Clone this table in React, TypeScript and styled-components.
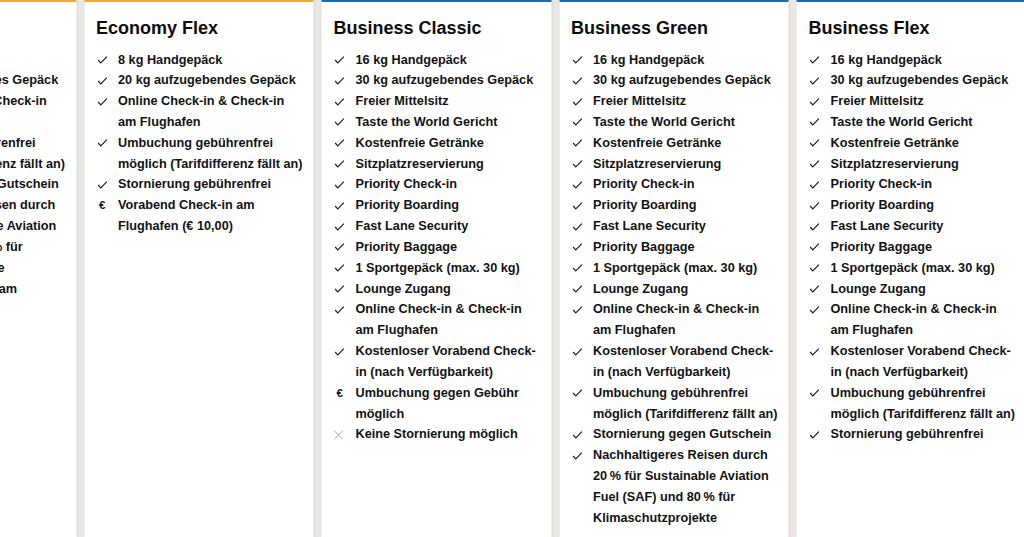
import React from 'react';
import styled, { createGlobalStyle } from 'styled-components';

const GlobalStyle = createGlobalStyle`
  html, body { margin: 0; padding: 0; }
  body {
    background: #ebe8e3;
    font-family: "Liberation Sans", Arial, Helvetica, sans-serif;
    color: #111;
    overflow: hidden;
  }
`;

type Mark = 'check' | 'euro' | 'cross';
type Feature = { mark: Mark; text: string };
type Plan = { title: string; accent: string; features: Feature[] };

const ORANGE = '#f8a71e';
const BLUE = '#0b70c2';

const c = (text: string): Feature => ({ mark: 'check', text });

const businessBase: Feature[] = [
  c('16 kg Handgepäck'),
  c('30 kg aufzugebendes Gepäck'),
  c('Freier Mittelsitz'),
  c('Taste the World Gericht'),
  c('Kostenfreie Getränke'),
  c('Sitzplatzreservierung'),
  c('Priority Check-in'),
  c('Priority Boarding'),
  c('Fast Lane Security'),
  c('Priority Baggage'),
  c('1 Sportgepäck (max. 30 kg)'),
  c('Lounge Zugang'),
  c('Online Check-in & Check-in am Flughafen'),
  c('Kostenloser Vorabend Check-in (nach Verfügbarkeit)'),
];

const saf = 'Nachhaltigeres Reisen durch 20\u202F% für Sustainable Aviation Fuel\u00A0(SAF) und 80\u202F% für Klimaschutzprojekte';

const plans: Plan[] = [
  {
    title: 'Economy Green',
    accent: ORANGE,
    features: [
      c('8 kg Handgepäck'),
      c('20 kg aufzugebendes Gepäck'),
      c('Online Check-in & Check-in am Flughafen'),
      c('Umbuchung gebührenfrei möglich (Tarifdifferenz fällt an)'),
      c('Stornierung gegen Gutschein'),
      c(saf),
      { mark: 'euro', text: 'Vorabend Check-in am Flughafen (€ 10,00)' },
    ],
  },
  {
    title: 'Economy Flex',
    accent: ORANGE,
    features: [
      c('8 kg Handgepäck'),
      c('20 kg aufzugebendes Gepäck'),
      c('Online Check-in & Check-in am Flughafen'),
      c('Umbuchung gebührenfrei möglich (Tarifdifferenz fällt an)'),
      c('Stornierung gebührenfrei'),
      { mark: 'euro', text: 'Vorabend Check-in am Flughafen (€ 10,00)' },
    ],
  },
  {
    title: 'Business Classic',
    accent: BLUE,
    features: [
      ...businessBase,
      { mark: 'euro', text: 'Umbuchung gegen Gebühr möglich' },
      { mark: 'cross', text: 'Keine Stornierung möglich' },
    ],
  },
  {
    title: 'Business Green',
    accent: BLUE,
    features: [
      ...businessBase,
      c('Umbuchung gebührenfrei möglich (Tarifdifferenz fällt an)'),
      c('Stornierung gegen Gutschein'),
      c(saf),
    ],
  },
  {
    title: 'Business Flex',
    accent: BLUE,
    features: [
      ...businessBase,
      c('Umbuchung gebührenfrei möglich (Tarifdifferenz fällt an)'),
      c('Stornierung gebührenfrei'),
    ],
  },
];

const Viewport = styled.div`
  width: 1024px;
  height: 537px;
  overflow: hidden;
  background: #ebe8e3;
`;

/* carousel track, scrolled so the first card is partly out of view */
const Track = styled.div`
  display: flex;
  gap: 8px;
  height: 100%;
  transform: translateX(-153.5px);
`;

const Card = styled.section<{ $accent: string }>`
  flex: 0 0 229.5px;
  box-sizing: border-box;
  background: #fff;
  border-top: 2px solid ${(p) => p.$accent};
  padding: 14px 8.5px 0 12px;
  box-shadow: 0 0 3px rgba(0, 0, 0, 0.13);
`;

const Title = styled.h2`
  margin: 0 0 9.5px;
  font-size: 18px;
  line-height: 24px;
  font-weight: 700;
  color: #0d0d0d;
`;

const List = styled.ul`
  list-style: none;
  margin: 0;
  padding: 0;
`;

const Item = styled.li`
  display: flex;
  font-size: 12.7px;
  line-height: 20.83px;
  font-weight: 700;
  color: #121212;
`;

const MarkCell = styled.span`
  flex: 0 0 22px;
  height: 20.83px;
  display: flex;
  align-items: center;
`;

const Euro = styled.span`
  margin-left: 3px;
  font-size: 11.5px;
  font-weight: 700;
  color: #1a1a1a;
`;

const IconSvg = styled.svg<{ $offset: number }>`
  display: block;
  margin-left: ${(p) => p.$offset}px;
`;

const Text = styled.span`
  flex: 1;
  min-width: 0;
`;

const MarkIcon: React.FC<{ mark: Mark }> = ({ mark }) => {
  if (mark === 'euro') return <Euro>€</Euro>;
  if (mark === 'cross')
    return (
      <IconSvg $offset={0} width="10" height="10" viewBox="0 0 10 10">
        <path d="M0.5 0.5 L9.5 9.5 M9.5 0.5 L0.5 9.5" stroke="#a5a5a5" strokeWidth="1" fill="none" />
      </IconSvg>
    );
  return (
    <IconSvg $offset={1} width="10" height="8" viewBox="0 0 10 8">
      <path d="M0.6 4 L3.3 6.8 L9.4 0.7" stroke="#1e1e1e" strokeWidth="1.2" fill="none" />
    </IconSvg>
  );
};

export default function App() {
  return (
    <>
      <GlobalStyle />
      <Viewport>
        <Track>
          {plans.map((plan) => (
            <Card key={plan.title} $accent={plan.accent}>
              <Title>{plan.title}</Title>
              <List>
                {plan.features.map((f, i) => (
                  <Item key={i}>
                    <MarkCell>
                      <MarkIcon mark={f.mark} />
                    </MarkCell>
                    <Text>{f.text}</Text>
                  </Item>
                ))}
              </List>
            </Card>
          ))}
        </Track>
      </Viewport>
    </>
  );
}
